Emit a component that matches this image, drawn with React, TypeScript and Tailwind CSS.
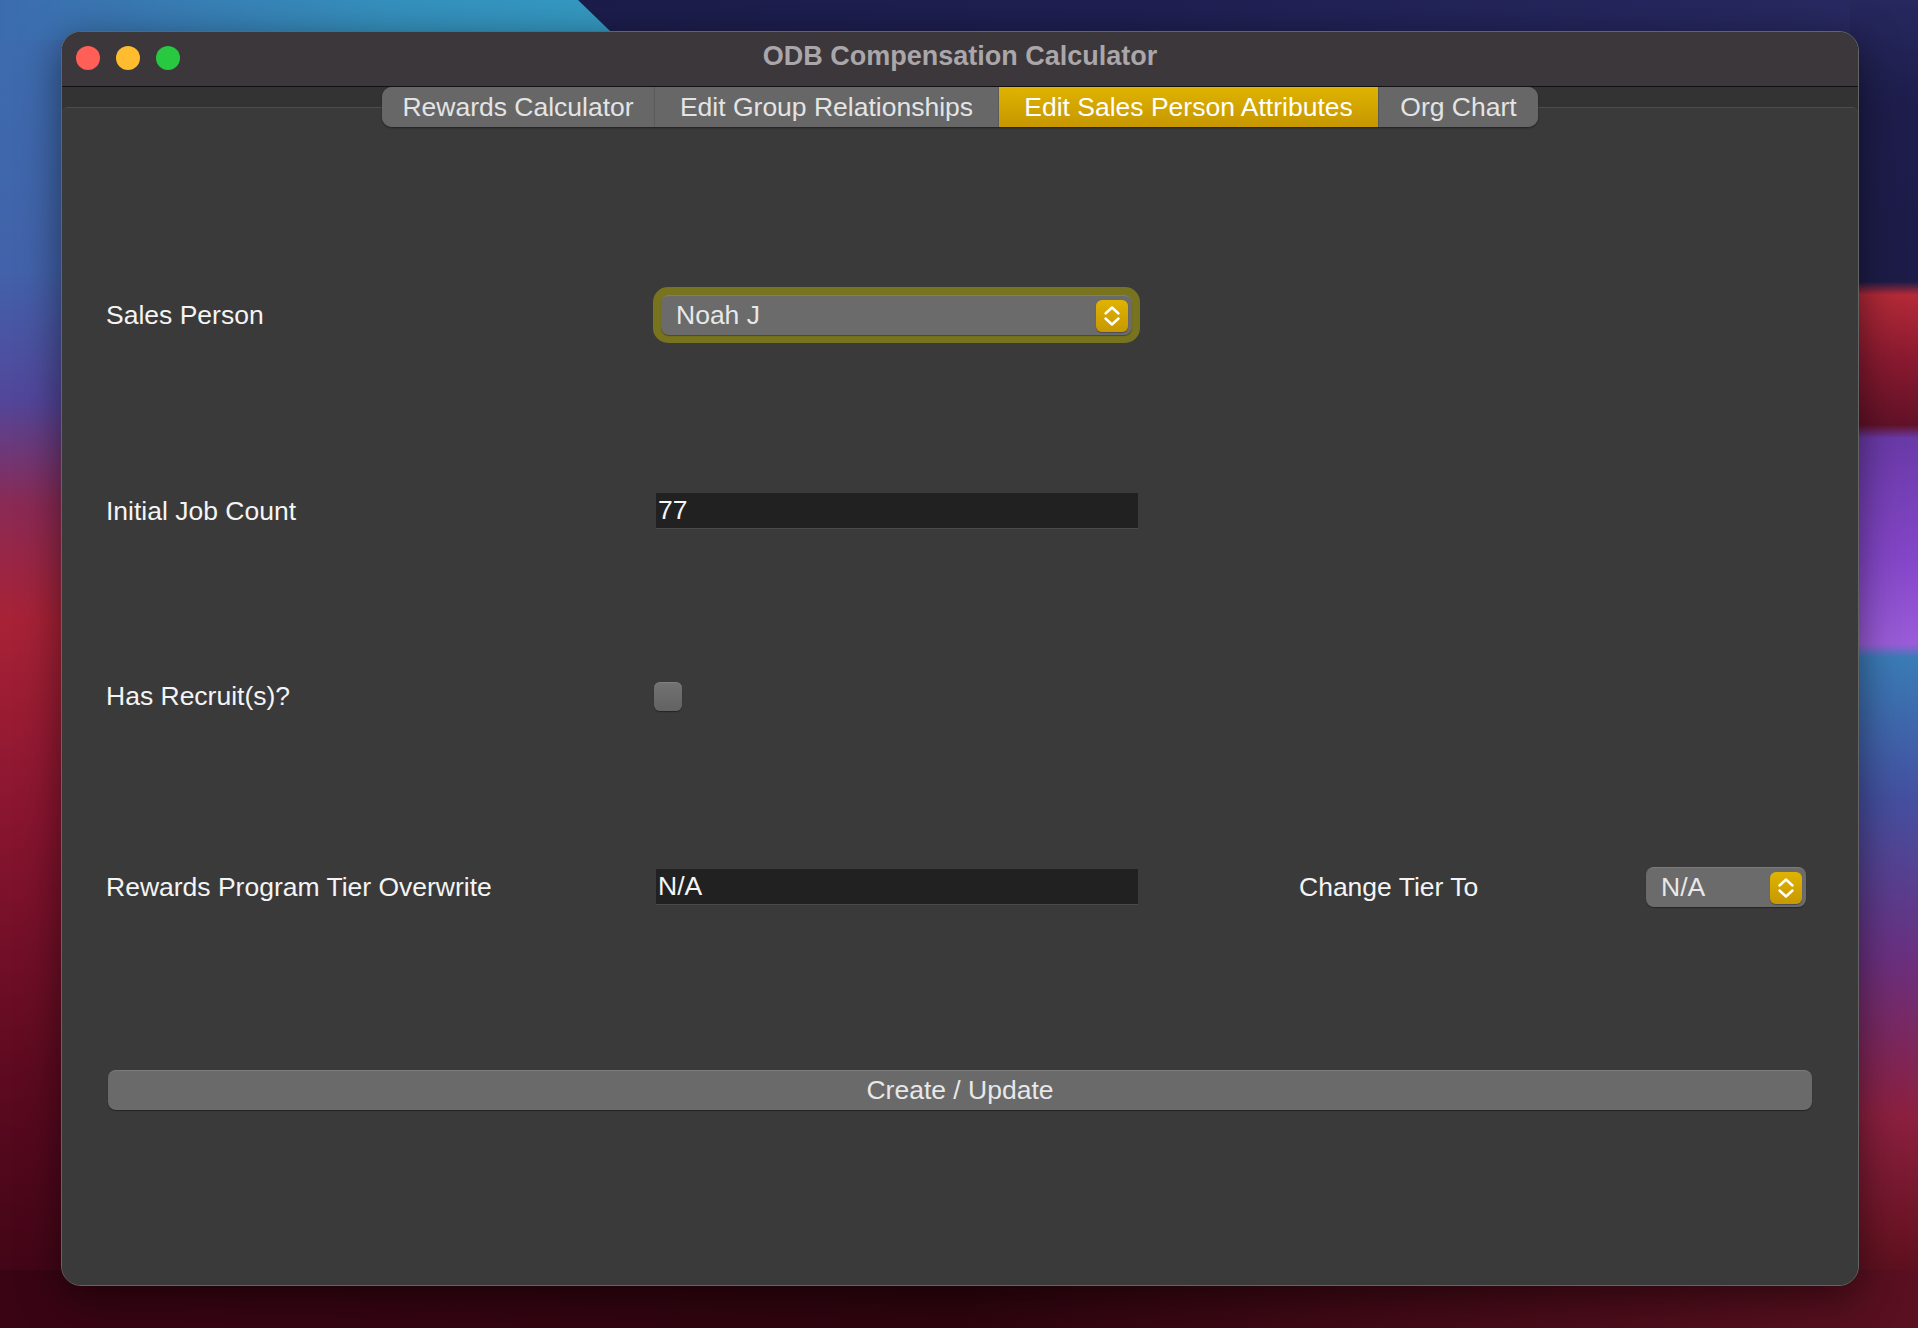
import React from "react";

function Wallpaper() {
  return (
    <svg className="absolute inset-0" width="1918" height="1328" viewBox="0 0 1918 1328" preserveAspectRatio="none">
      <defs>
        <linearGradient id="topL" x1="0" y1="0" x2="1" y2="0">
          <stop offset="0" stopColor="#3c6cae" />
          <stop offset="0.6" stopColor="#3590bd" />
          <stop offset="1" stopColor="#349bc2" />
        </linearGradient>
        <linearGradient id="topR" x1="0" y1="0" x2="1" y2="0">
          <stop offset="0" stopColor="#1a1a46" />
          <stop offset="0.6" stopColor="#1f1f52" />
          <stop offset="1" stopColor="#282a62" />
        </linearGradient>
        <linearGradient id="left" x1="0" y1="0" x2="0" y2="1">
          <stop offset="0" stopColor="#3d6cae" />
          <stop offset="0.18" stopColor="#4262aa" />
          <stop offset="0.28" stopColor="#52469a" />
          <stop offset="0.36" stopColor="#8a2a55" />
          <stop offset="0.45" stopColor="#a82236" />
          <stop offset="0.6" stopColor="#8a1530" />
          <stop offset="0.8" stopColor="#5e0a20" />
          <stop offset="1" stopColor="#3a0414" />
        </linearGradient>
        <linearGradient id="right" x1="0" y1="0" x2="0" y2="1">
          <stop offset="0" stopColor="#26285e" />
          <stop offset="0.08" stopColor="#1e1d4c" />
          <stop offset="0.212" stopColor="#1d1c48" />
          <stop offset="0.222" stopColor="#b42a38" />
          <stop offset="0.27" stopColor="#8a1a30" />
          <stop offset="0.32" stopColor="#621228" />
          <stop offset="0.33" stopColor="#6a3aa8" />
          <stop offset="0.42" stopColor="#8446c8" />
          <stop offset="0.485" stopColor="#9a5cd8" />
          <stop offset="0.495" stopColor="#3a7cb6" />
          <stop offset="0.6" stopColor="#4450a0" />
          <stop offset="0.72" stopColor="#6a3080" />
          <stop offset="0.84" stopColor="#8c2040" />
          <stop offset="0.93" stopColor="#6a1424" />
          <stop offset="1" stopColor="#4a0a18" />
        </linearGradient>
        <linearGradient id="bottom" x1="0" y1="0" x2="1" y2="0">
          <stop offset="0" stopColor="#3a0414" />
          <stop offset="0.5" stopColor="#2e040e" />
          <stop offset="1" stopColor="#5a1020" />
        </linearGradient>
      </defs>
      <rect x="0" y="0" width="1918" height="1328" fill="#2a0a1a" />
      <rect x="0" y="0" width="1918" height="60" fill="url(#topR)" />
      <polygon points="0,0 578,0 640,60 0,60" fill="url(#topL)" />
      <rect x="0" y="40" width="70" height="1288" fill="url(#left)" />
      <rect x="1850" y="0" width="68" height="1328" fill="url(#right)" />
      <rect x="0" y="1270" width="1918" height="58" fill="url(#bottom)" />
    </svg>
  );
}

function Chevrons() {
  return (
    <svg width="32" height="32" viewBox="0 0 32 32" fill="none">
      <path d="M9.5 13.5 L16 7.5 L22.5 13.5" stroke="#ffffff" strokeWidth="2.4" strokeLinecap="round" strokeLinejoin="round" />
      <path d="M9.5 18.5 L16 24.5 L22.5 18.5" stroke="#ffffff" strokeWidth="2.4" strokeLinecap="round" strokeLinejoin="round" />
    </svg>
  );
}

function Combo({ value, width }: { value: string; width: string }) {
  return (
    <div
      className={`${width} h-[40px] rounded-[8px] bg-[#6b6b6b] border-t border-[#7c7c7c] shadow-[0_1px_1px_rgba(0,0,0,0.35)] flex items-center justify-between pl-[15px] pr-[4px]`}
    >
      <span className="text-[26.5px] leading-none text-[#e8e8e8]">{value}</span>
      <div className="w-[32px] h-[32px] rounded-[6px] bg-gradient-to-b from-[#e0b302] to-[#c79800] shadow-[0_1px_1px_rgba(0,0,0,0.3)] flex items-center justify-center">
        <Chevrons />
      </div>
    </div>
  );
}

function TextField({ value }: { value: string }) {
  return (
    <div className="ml-[3px] w-[482px] h-[36px] bg-[#212121] border-b border-[#4b4b4b] flex items-center pl-[2px]">
      <span className="text-[26.5px] leading-none text-[#f6f6f6]">{value}</span>
    </div>
  );
}

const tabs = [
  { label: "Rewards Calculator", w: "w-[272px]", sel: false },
  { label: "Edit Group Relationships", w: "w-[344px]", sel: false },
  { label: "Edit Sales Person Attributes", w: "w-[380px]", sel: true },
  { label: "Org Chart", w: "w-[160px]", sel: false },
];

export default function App() {
  return (
    <div className="relative w-[1918px] h-[1328px] overflow-hidden font-['Liberation_Sans',Arial,sans-serif]">
      <Wallpaper />
      <div className="relative pt-[31px] pl-[61px]">
        <div className="w-[1798px] h-[1255px] rounded-[20px] border border-[#646464] overflow-hidden bg-[#333333] flex flex-col shadow-[0_10px_40px_rgba(0,0,0,0.5)]">
          {/* Title bar */}
          <div className="relative h-[55px] shrink-0 bg-[#3b373a] border-b border-[#121212] flex items-center justify-center">
            <div className="absolute left-[14px] top-[14px] flex gap-[16px]">
              <div className="w-[24px] h-[24px] rounded-full bg-[#ff5f57]" />
              <div className="w-[24px] h-[24px] rounded-full bg-[#febc2e]" />
              <div className="w-[24px] h-[24px] rounded-full bg-[#28c840]" />
            </div>
            <span className="text-[27px] leading-none font-bold text-[#aaa6a9] -mt-[5px]">
              ODB Compensation Calculator
            </span>
          </div>
          {/* Body */}
          <div className="flex-1 pt-[20px] flex flex-col">
            <div className="flex-1 bg-[#3a3a3a] border-t border-[#4c4c4c] rounded-t-[6px] flex flex-col">
              {/* Tabs */}
              <div className="-mt-[21px] flex justify-center">
                <div className="flex h-[40px] rounded-[10px] overflow-hidden shadow-[0_1px_2px_rgba(0,0,0,0.45)] bg-[#676767]">
                  {tabs.map((t, i) => (
                    <div
                      key={t.label}
                      className={`${t.w} h-full flex items-center justify-center ${
                        i > 0 ? "border-l border-[#5a5a5a]" : ""
                      } ${t.sel ? "bg-gradient-to-b from-[#e0b300] to-[#c69700] text-white" : "bg-[#676767] text-[#e4e4e4]"}`}
                    >
                      <span className="text-[26.5px] leading-none">{t.label}</span>
                    </div>
                  ))}
                </div>
              </div>

              {/* Form */}
              <div className="pl-[44px] flex flex-col text-[#f4f4f4]">
                {/* Row 1 */}
                <div className="mt-[158px] h-[60px] flex items-center">
                  <div className="w-[547px] text-[26.5px] leading-none">Sales Person</div>
                  <div className="p-[8px] rounded-[15px] bg-[#78731e]">
                    <Combo value="Noah J" width="w-[471px]" />
                  </div>
                </div>
                {/* Row 2 */}
                <div className="mt-[136px] h-[60px] flex items-center">
                  <div className="w-[547px] text-[26.5px] leading-none">Initial Job Count</div>
                  <TextField value="77" />
                </div>
                {/* Row 3 */}
                <div className="mt-[125px] h-[60px] flex items-center">
                  <div className="w-[547px] text-[26.5px] leading-none">Has Recruit(s)?</div>
                  <div className="ml-[1px] w-[28px] h-[29px] rounded-[6px] bg-gradient-to-b from-[#727272] to-[#626262] border-t border-[#808080] shadow-[0_1px_1px_rgba(0,0,0,0.4)]" />
                </div>
                {/* Row 4 */}
                <div className="mt-[131px] h-[60px] flex items-center">
                  <div className="w-[547px] text-[26.5px] leading-none">Rewards Program Tier Overwrite</div>
                  <TextField value="N/A" />
                  <div className="ml-[161px] w-[347px] text-[26.5px] leading-none">Change Tier To</div>
                  <Combo value="N/A" width="w-[160px]" />
                </div>
                {/* Button */}
                <div className="mt-[153px] ml-[2px] w-[1704px] h-[40px] rounded-[8px] bg-[#6a6a6a] border-t border-[#7b7b7b] shadow-[0_1px_1px_rgba(0,0,0,0.4)] flex items-center justify-center">
                  <span className="text-[26.5px] leading-none text-[#e8e8e8]">Create / Update</span>
                </div>
              </div>
            </div>
          </div>
        </div>
      </div>
    </div>
  );
}
